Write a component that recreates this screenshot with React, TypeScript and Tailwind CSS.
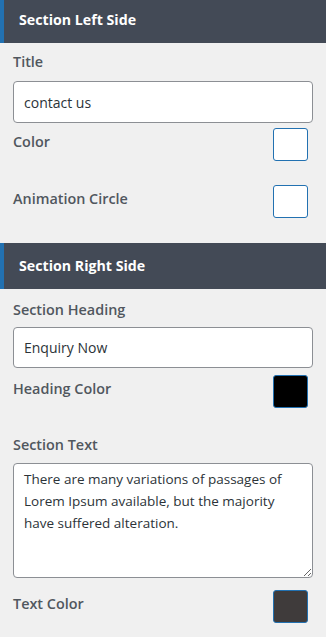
const font = { fontFamily: '"Open Sans", "Noto Sans", sans-serif' }

function SectionHeader({ title, className }: { title: string; className?: string }) {
  return (
    <div className={`flex items-center border-l-4 border-[#2271b1] bg-[#434a56] pl-[15px] ${className ?? ''}`}>
      <h3 className="text-[14.2px] font-bold text-white">{title}</h3>
    </div>
  )
}

function Swatch({ color }: { color: string }) {
  return (
    <button
      type="button"
      className="h-[33px] w-[35px] shrink-0 rounded-[3px] border border-[#2271b1]"
      style={{ backgroundColor: color }}
    />
  )
}

function ColorRow({ label, color, className }: { label: string; color: string; className?: string }) {
  return (
    <div className={`flex items-start justify-between pr-[5px] ${className ?? ''}`}>
      <span className="mt-[4px] text-[14.4px] leading-[20px] font-semibold text-[#50575e]">{label}</span>
      <Swatch color={color} />
    </div>
  )
}

export default function App() {
  return (
    <div className="min-h-screen w-[326px] bg-[#f0f0f0]" style={font}>
      <SectionHeader title="Section Left Side" className="h-[43px] pb-[3px]" />
      <div className="px-[13px]">
        <label className="block pt-[9px] text-[14.4px] leading-[20px] font-semibold text-[#50575e]">Title</label>
        <input
          type="text"
          defaultValue="contact us"
          className="mt-[9px] block h-[42px] w-full rounded-[4px] border border-[#8c8f94] bg-white px-[10px] text-[14px] text-[#2c3338] outline-none"
        />
        <ColorRow label="Color" color="#ffffff" className="mt-[5px]" />
        <ColorRow label="Animation Circle" color="#ffffff" className="mt-[24px]" />
      </div>

      <SectionHeader title="Section Right Side" className="mt-[25px] h-[46px]" />
      <div className="px-[13px] pb-[14px]">
        <label className="block pt-[11px] text-[14.4px] leading-[20px] font-semibold text-[#50575e]">Section Heading</label>
        <input
          type="text"
          defaultValue="Enquiry Now"
          className="mt-[7px] block h-[41px] w-full rounded-[4px] border border-[#8c8f94] bg-white px-[10px] text-[14px] text-[#2c3338] outline-none"
        />
        <ColorRow label="Heading Color" color="#000000" className="mt-[7px]" />
        <label className="mt-[27px] block text-[14.4px] leading-[20px] font-semibold text-[#50575e]">Section Text</label>
        <textarea
          defaultValue="There are many variations of passages of Lorem Ipsum available, but the majority have suffered alteration."
          className="mt-[8px] block h-[115px] w-full resize-y rounded-[4px] border border-[#8c8f94] bg-white px-[10px] pt-[4px] text-[13.5px] leading-[22px] text-[#2c3338] outline-none"
        />
        <ColorRow label="Text Color" color="#3f3b3b" className="mt-[12px]" />
      </div>
    </div>
  )
}
